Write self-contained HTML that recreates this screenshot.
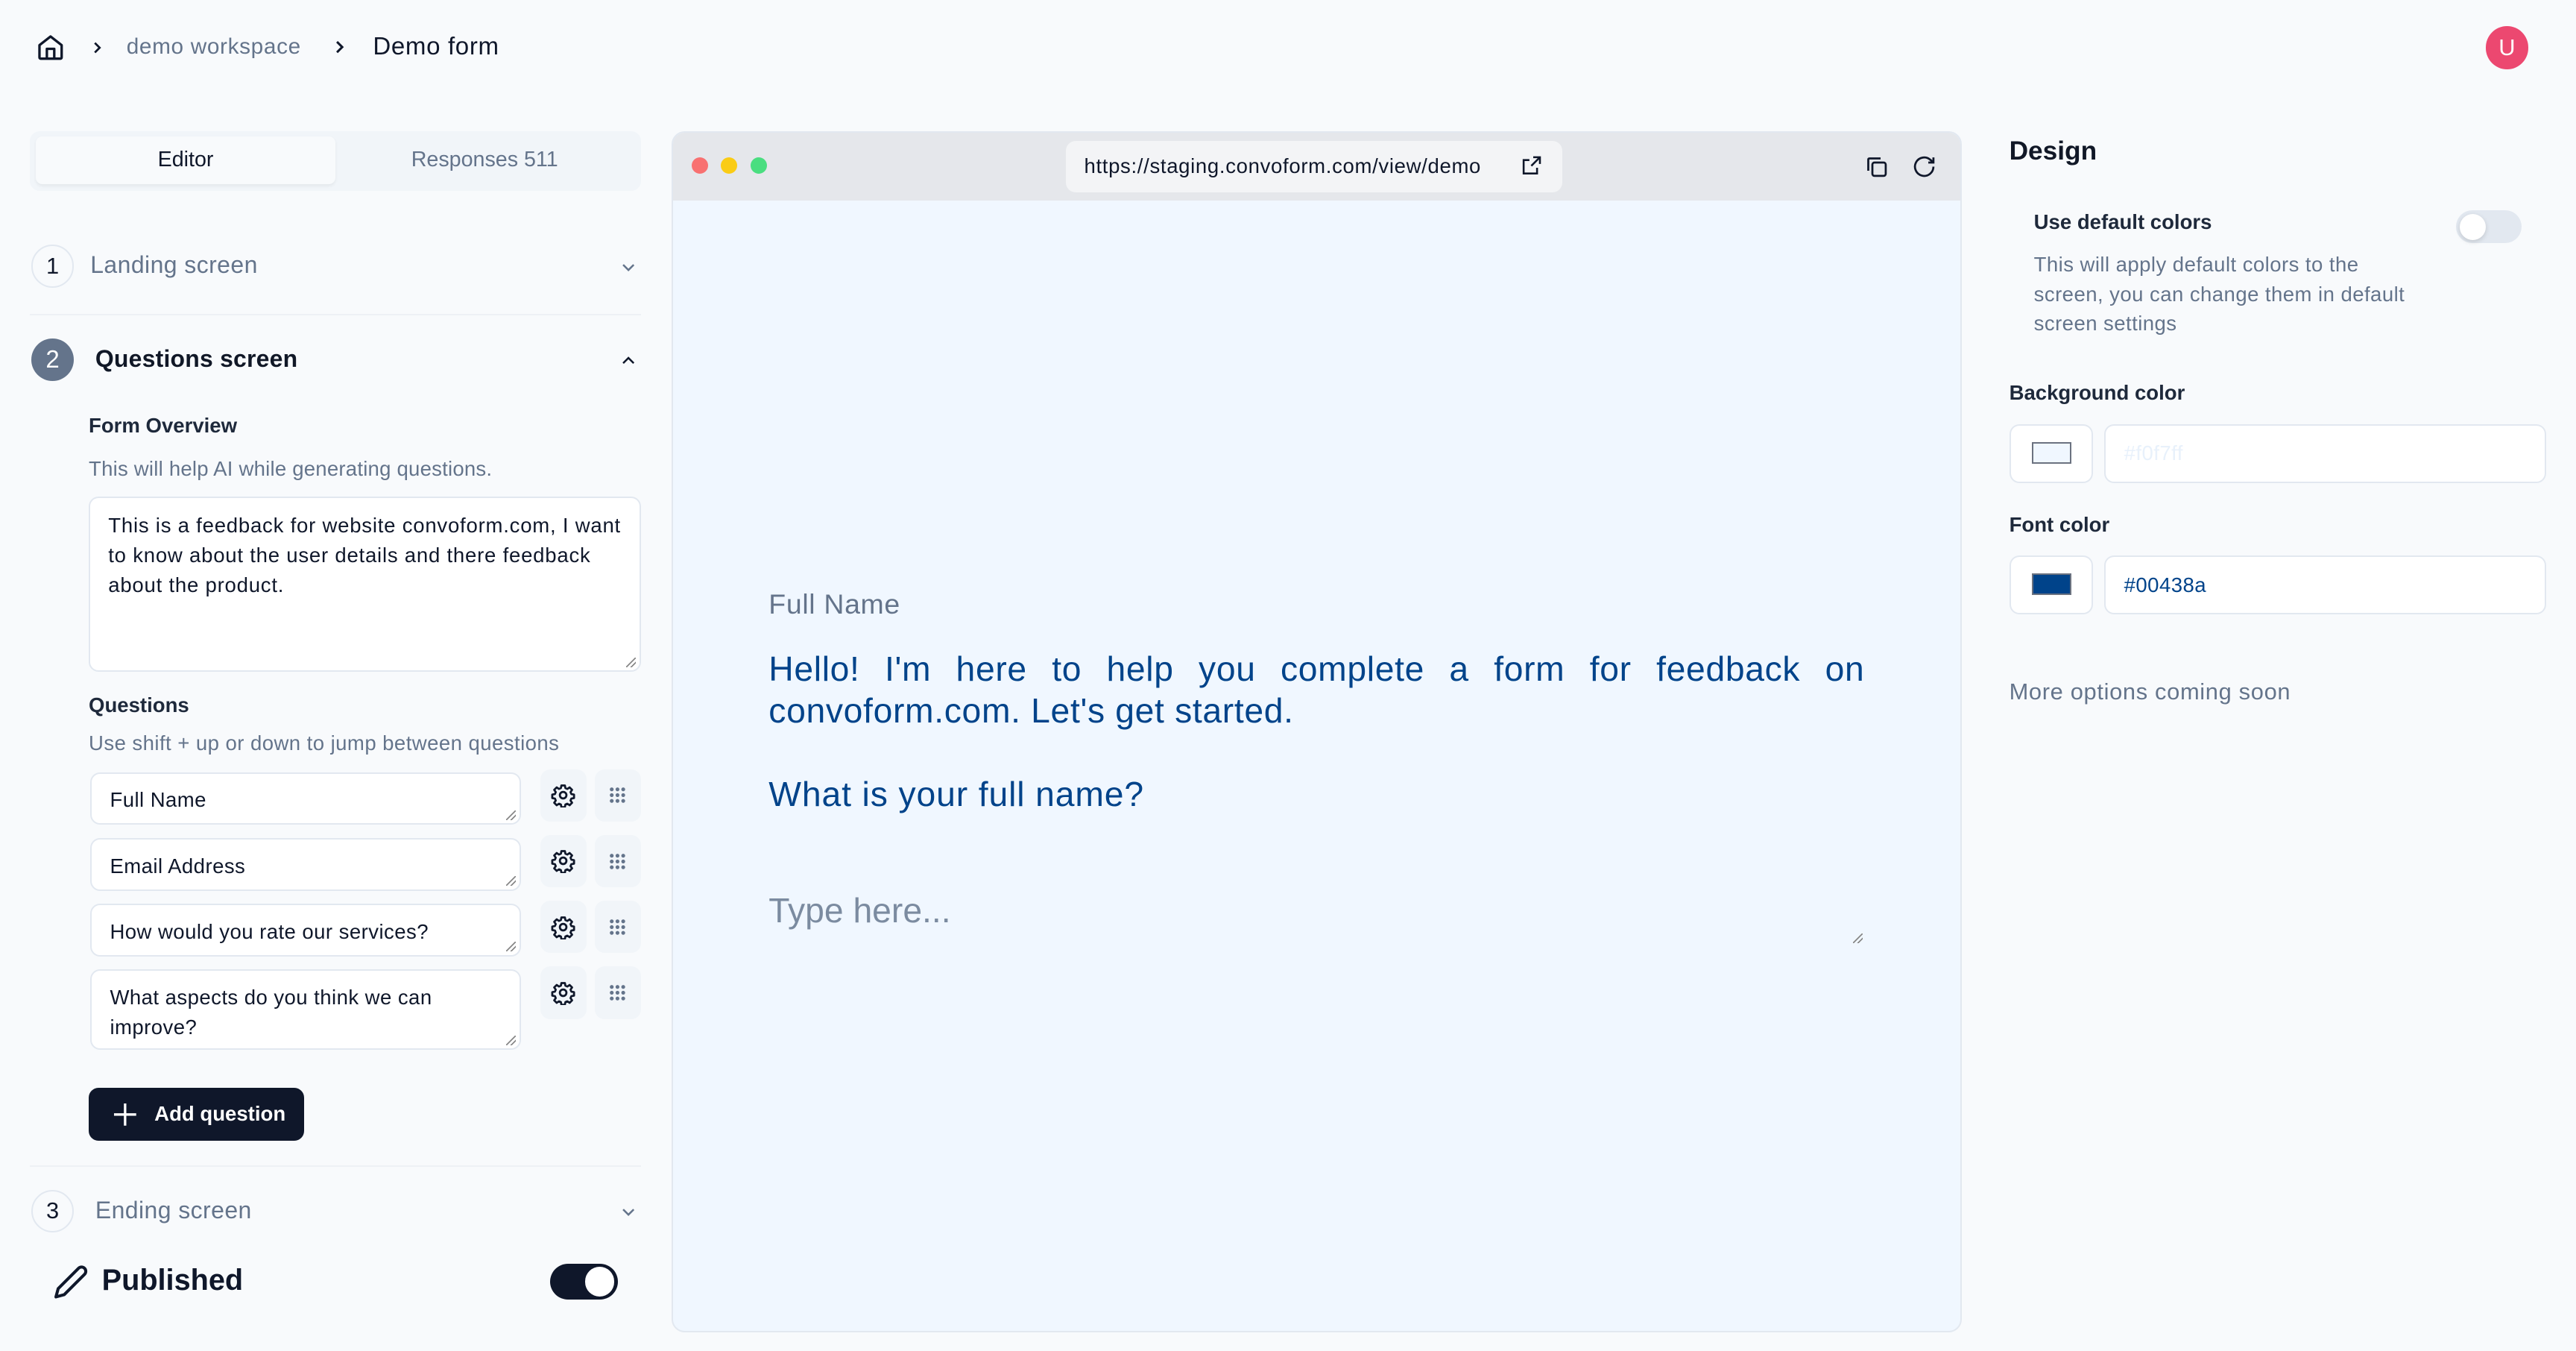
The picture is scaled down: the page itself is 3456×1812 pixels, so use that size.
<!DOCTYPE html>
<html><head><meta charset="utf-8"><style>
*{box-sizing:border-box;margin:0;padding:0}
html,body{width:3456px;height:1812px;overflow:hidden;background:#f8fafc}
#r{zoom:2.20408;width:1568px;height:822px;position:relative;font-family:"Liberation Sans",sans-serif;color:#0f172a}
.a{position:absolute;white-space:nowrap}
.g{color:#64748b}
.inp{position:absolute;background:#fff;border:1px solid #e2e8f0;border-radius:6px;font-size:12.5px;padding:8px 11px;line-height:18px;letter-spacing:0.2px}
.btn{position:absolute;width:28px;height:32px;background:#f1f5f9;border-radius:6px;display:flex;align-items:center;justify-content:center}
.circ{position:absolute;width:26px;height:26px;border-radius:50%;border:1px solid #e2e8f0;display:flex;align-items:center;justify-content:center;font-size:14px}
.rz{position:absolute;right:2px;bottom:2px;width:6px;height:6px;background:linear-gradient(135deg,transparent 45%,#888 45%,#888 55%,transparent 55%,transparent 70%,#888 70%,#888 80%,transparent 80%)}
</style></head><body><div id="r">
<svg class="a" style="left:22px;top:20px" width="18" height="18" viewBox="0 0 24 24" fill="none" stroke="#0f172a" stroke-width="2" stroke-linejoin="round"><path d="M3 10l9-7 9 7v10a1 1 0 0 1-1 1H4a1 1 0 0 1-1-1z"/><path d="M9 21v-8h6v8"/></svg>
<svg class="a" style="left:54px;top:24px" width="10" height="10" viewBox="0 0 24 24" fill="none" stroke="#0f172a" stroke-width="3"><path d="M9 5l7 7-7 7"/></svg>
<div class="a g" style="left:77px;top:21px;font-size:13.5px;letter-spacing:0.3px">demo workspace</div>
<svg class="a" style="left:201px;top:23px" width="11" height="11" viewBox="0 0 24 24" fill="none" stroke="#0f172a" stroke-width="3"><path d="M9 5l7 7-7 7"/></svg>
<div class="a" style="left:227px;top:20px;font-size:15px;font-weight:500;letter-spacing:0.3px">Demo form</div>
<div class="a" style="left:1513px;top:16px;width:26px;height:26px;border-radius:50%;background:#ec4870;color:#fff;font-size:14px;display:flex;align-items:center;justify-content:center">U</div>

<div class="a" style="left:18px;top:80px;width:372px;height:36px;background:#f1f5f9;border-radius:6px"></div>
<div class="a" style="left:22px;top:83px;width:182px;height:29px;background:#f8fafc;border-radius:4px;box-shadow:0 1px 2px rgba(0,0,0,.06);font-size:13px;display:flex;align-items:center;justify-content:center">Editor</div>
<div class="a g" style="left:204px;top:83px;width:182px;height:29px;font-size:13px;display:flex;align-items:center;justify-content:center">Responses 511</div>

<div class="circ" style="left:19px;top:149px">1</div>
<div class="a g" style="left:55px;top:153px;font-size:14.5px;letter-spacing:0.2px">Landing screen</div>
<svg class="a" style="left:377px;top:157px" width="11" height="11" viewBox="0 0 24 24" fill="none" stroke="#64748b" stroke-width="2.5"><path d="M5 9l7 7 7-7"/></svg>
<div class="a" style="left:18px;top:191px;width:372px;height:1px;background:#eef1f5"></div>

<div class="circ" style="left:19px;top:206px;background:#64748b;border:none;color:#fff;font-size:15px">2</div>
<div class="a" style="left:58px;top:210px;font-size:14.5px;font-weight:bold;letter-spacing:0.1px;color:#111827">Questions screen</div>
<svg class="a" style="left:377px;top:214px" width="11" height="11" viewBox="0 0 24 24" fill="none" stroke="#0f172a" stroke-width="2.5"><path d="M5 15l7-7 7 7"/></svg>

<div class="a" style="left:54px;top:252px;font-size:12.5px;font-weight:bold;color:#1e293b">Form Overview</div>
<div class="a g" style="left:54px;top:278px;font-size:12.5px;letter-spacing:0.1px">This will help AI while generating questions.</div>
<div class="inp" style="left:54px;top:302px;width:336px;height:107px;padding:8px 10px 0 11px;white-space:normal;letter-spacing:0.35px">This is a feedback for website convoform.com, I want to know about the user details and there feedback about the product.<div class="rz"></div></div>

<div class="a" style="left:54px;top:422px;font-size:12.5px;font-weight:bold;color:#1e293b">Questions</div>
<div class="a g" style="left:54px;top:445px;font-size:12.5px;letter-spacing:0.2px">Use shift + up or down to jump between questions</div>

<div class="inp" style="left:55px;top:470px;width:262px;height:32px;padding-top:7px">Full Name<div class="rz"></div></div>
<div class="inp" style="left:55px;top:510px;width:262px;height:32px;padding-top:7px">Email Address<div class="rz"></div></div>
<div class="inp" style="left:55px;top:550px;width:262px;height:32px;padding-top:7px">How would you rate our services?<div class="rz"></div></div>
<div class="inp" style="left:55px;top:590px;width:262px;height:49px;padding-top:7px;white-space:normal">What aspects do you think we can improve?<div class="rz"></div></div>

<svg width="0" height="0" style="position:absolute"><defs>
<g id="gear" fill="none" stroke="#0f172a" stroke-width="2" stroke-linejoin="round"><path d="M10.3 2.5h3.4l.5 2.6 1.9.8 2.2-1.5 2.4 2.4-1.5 2.2.8 1.9 2.6.5v3.4l-2.6.5-.8 1.9 1.5 2.2-2.4 2.4-2.2-1.5-1.9.8-.5 2.6h-3.4l-.5-2.6-1.9-.8-2.2 1.5-2.4-2.4 1.5-2.2-.8-1.9-2.6-.5v-3.4l2.6-.5.8-1.9-1.5-2.2 2.4-2.4 2.2 1.5 1.9-.8z"/><circle cx="12" cy="12" r="3.2"/></g>
<g id="dots" fill="#64748b"><circle cx="6" cy="6" r="2"/><circle cx="12" cy="6" r="2"/><circle cx="18" cy="6" r="2"/><circle cx="6" cy="12" r="2"/><circle cx="12" cy="12" r="2"/><circle cx="18" cy="12" r="2"/><circle cx="6" cy="18" r="2"/><circle cx="12" cy="18" r="2"/><circle cx="18" cy="18" r="2"/></g>
</defs></svg>
<div class="btn" style="left:329px;top:468px"><svg width="15" height="15" viewBox="0 0 24 24"><use href="#gear"/></svg></div>
<div class="btn" style="left:362px;top:468px"><svg width="14" height="14" viewBox="0 0 24 24"><use href="#dots"/></svg></div>
<div class="btn" style="left:329px;top:508px"><svg width="15" height="15" viewBox="0 0 24 24"><use href="#gear"/></svg></div>
<div class="btn" style="left:362px;top:508px"><svg width="14" height="14" viewBox="0 0 24 24"><use href="#dots"/></svg></div>
<div class="btn" style="left:329px;top:548px"><svg width="15" height="15" viewBox="0 0 24 24"><use href="#gear"/></svg></div>
<div class="btn" style="left:362px;top:548px"><svg width="14" height="14" viewBox="0 0 24 24"><use href="#dots"/></svg></div>
<div class="btn" style="left:329px;top:588px"><svg width="15" height="15" viewBox="0 0 24 24"><use href="#gear"/></svg></div>
<div class="btn" style="left:362px;top:588px"><svg width="14" height="14" viewBox="0 0 24 24"><use href="#dots"/></svg></div>

<div class="a" style="left:54px;top:662px;width:131px;height:32px;background:#0f172a;border-radius:6px;color:#fff;font-size:12.5px;font-weight:bold;display:flex;align-items:center;padding-left:40px">Add question</div>
<svg class="a" style="left:67px;top:669px" width="18" height="18" viewBox="0 0 24 24" stroke="#fff" stroke-width="2"><path d="M12 3v18M3 12h18"/></svg>
<div class="a" style="left:18px;top:709px;width:372px;height:1px;background:#eef1f5"></div>

<div class="circ" style="left:19px;top:724px">3</div>
<div class="a g" style="left:58px;top:728px;font-size:14.5px;letter-spacing:0.2px">Ending screen</div>
<svg class="a" style="left:377px;top:732px" width="11" height="11" viewBox="0 0 24 24" fill="none" stroke="#64748b" stroke-width="2.5"><path d="M5 9l7 7 7-7"/></svg>

<svg class="a" style="left:32px;top:769px" width="22" height="22" viewBox="0 0 24 24" fill="none" stroke="#0f172a" stroke-width="2" stroke-linejoin="round"><path d="M17 3a2.8 2.8 0 0 1 4 4L7.5 20.5 2 22l1.5-5.5z"/></svg>
<div class="a" style="left:62px;top:769px;font-size:18px;font-weight:700">Published</div>
<div class="a" style="left:335px;top:769px;width:41px;height:22px;border-radius:11px;background:#0f172a"></div>
<div class="a" style="left:356px;top:771px;width:18px;height:18px;border-radius:50%;background:#fff"></div>

<div class="a" style="left:409px;top:80px;width:785px;height:731px;border:1px solid #e2e8f0;border-radius:8px;background:#f0f7ff;overflow:hidden;white-space:normal">
 <div style="position:absolute;left:0;top:0;width:100%;height:41px;background:#e5e7eb"></div>
 <div style="position:absolute;left:11px;top:15px;width:10px;height:10px;border-radius:50%;background:#f87171"></div>
 <div style="position:absolute;left:29px;top:15px;width:10px;height:10px;border-radius:50%;background:#facc15"></div>
 <div style="position:absolute;left:47px;top:15px;width:10px;height:10px;border-radius:50%;background:#4ade80"></div>
 <div style="position:absolute;left:239px;top:5px;width:302px;height:31px;background:#f3f4f6;border-radius:6px;font-size:12.5px;padding:8px 0 0 11px;white-space:nowrap;letter-spacing:0.3px">https://staging.convoform.com/view/demo</div>
 <svg style="position:absolute;left:515px;top:13px" width="14" height="14" viewBox="0 0 24 24" fill="none" stroke="#0f172a" stroke-width="2"><path d="M14 3h7v7M21 3l-9 9M18 14v6H4V6h6"/></svg>
 <svg style="position:absolute;left:725px;top:13px" width="15" height="15" viewBox="0 0 24 24" fill="none" stroke="#0f172a" stroke-width="2"><rect x="8" y="8" width="13" height="13" rx="2"/><path d="M4 16V5a1 1 0 0 1 1-1h11"/></svg>
 <svg style="position:absolute;left:754px;top:13px" width="15" height="15" viewBox="0 0 24 24" fill="none" stroke="#0f172a" stroke-width="2"><path d="M21 12a9 9 0 1 1-3-6.7L21 8M21 3v5h-5"/></svg>
 <div style="position:absolute;left:58px;top:277px;font-size:17px;color:#64748b;letter-spacing:0.3px">Full Name</div>
 <div style="position:absolute;left:58px;top:314px;width:667px;font-size:21px;line-height:25px;color:#00438a;text-align:justify;text-align-last:left;letter-spacing:0.3px">Hello! I'm here to help you complete a form for feedback on convoform.com. Let's get started.</div>
 <div style="position:absolute;left:58px;top:390px;font-size:21px;color:#00438a;letter-spacing:0.4px">What is your full name?</div>
 <div style="position:absolute;left:58px;top:461px;font-size:21px;color:#7b8ba0">Type here...</div>
 <div class="rz" style="left:718px;top:487px;right:auto;bottom:auto"></div>
</div>

<div class="a" style="left:1223px;top:83px;font-size:16px;font-weight:bold;color:#111827">Design</div>
<div class="a" style="left:1238px;top:128px;font-size:12.5px;font-weight:bold;color:#1e293b">Use default colors</div>
<div class="a g" style="left:1238px;top:152px;font-size:12.5px;line-height:18px;white-space:normal;width:232px;letter-spacing:0.2px">This will apply default colors to the screen, you can change them in default screen settings</div>
<div class="a" style="left:1495px;top:128px;width:40px;height:20px;border-radius:10px;background:#e2e8f0"></div>
<div class="a" style="left:1497px;top:130px;width:16px;height:16px;border-radius:50%;background:#fff;box-shadow:0 1px 3px rgba(0,0,0,.15)"></div>
<div class="a" style="left:1223px;top:232px;font-size:12.5px;font-weight:bold;color:#1e293b">Background color</div>
<div class="inp" style="left:1223px;top:258px;width:51px;height:36px"></div>
<div class="a" style="left:1237px;top:269px;width:24px;height:13px;background:#f0f7ff;border:1px solid #6b7280"></div>
<div class="inp" style="left:1281px;top:258px;width:269px;height:36px;color:#e8f1fb;padding-top:8px">#f0f7ff</div>
<div class="a" style="left:1223px;top:312px;font-size:12.5px;font-weight:bold;color:#1e293b">Font color</div>
<div class="inp" style="left:1223px;top:338px;width:51px;height:36px"></div>
<div class="a" style="left:1237px;top:349px;width:24px;height:13px;background:#00438a;border:1px solid #6b7280"></div>
<div class="inp" style="left:1281px;top:338px;width:269px;height:36px;color:#00438a;padding-top:8px">#00438a</div>
<div class="a g" style="left:1223px;top:413px;font-size:14px;letter-spacing:0.3px">More options coming soon</div>
</div></body></html>
